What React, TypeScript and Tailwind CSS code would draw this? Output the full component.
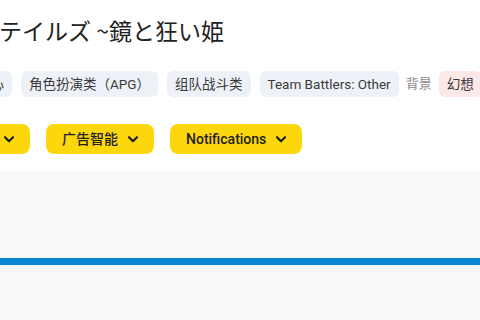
import React from 'react';

const Chevron: React.FC = () => (
    <svg width="10" height="7" viewBox="0 0 10 7" className="shrink-0">
        <path d="M1 1.2l4 4 4-4" fill="none" stroke="#1f1f1f" strokeWidth="2.2" strokeLinecap="round" strokeLinejoin="round" />
    </svg>
);

const Tag: React.FC<{ label: string; tone?: 'blue' | 'pink' }> = ({ label, tone = 'blue' }) => (
    <span className={`shrink-0 h-[26px] px-2 flex items-center rounded-md text-[13.5px] text-[#3a3a3a] whitespace-nowrap ${tone === 'pink' ? 'bg-[#fde8e8]' : 'bg-[#eef2f8]'}`}>
        {label}
    </span>
);

const DropButton: React.FC<{ label: string }> = ({ label }) => (
    <button className="shrink-0 h-[30px] pl-4 pr-4 flex items-center gap-[10px] rounded-lg bg-[#fdd70d] text-[14px] font-medium text-[#1f1f1f] whitespace-nowrap">
        <span>{label}</span>
        <Chevron />
    </button>
);

const App: React.FC = () => {
    return (
        <div className="w-[480px] h-[320px] overflow-hidden bg-white flex flex-col font-['Roboto','Noto_Sans_CJK_SC',sans-serif]">
            <h1 className="mt-[15px] h-[30px] leading-[30px] text-[23px] font-normal text-[#222] whitespace-nowrap -ml-[1px] font-['Noto_Sans_CJK_JP',sans-serif]">
                テイルズ ~鏡と狂い姫
            </h1>

            <div className="mt-[26px] -ml-[31px] flex items-center gap-[9px]">
                <Tag label="核心" />
                <Tag label="角色扮演类（APG）" />
                <Tag label="组队战斗类" />
                <Tag label="Team Battlers: Other" />
                <span className="shrink-0 -mx-[2px] text-[13px] text-[#8a8a8a]">背景</span>
                <Tag label="幻想" tone="pink" />
            </div>

            <div className="mt-[27px] -ml-[50px] flex items-center gap-4">
                <DropButton label="类型" />
                <DropButton label="广告智能" />
                <DropButton label="Notifications" />
            </div>

            <div className="mt-[17px] flex-1 bg-[#f8f9fa] pt-[87px]">
                <div className="h-[7px] bg-[#0a84d4]" />
            </div>
        </div>
    );
};

export default App;
